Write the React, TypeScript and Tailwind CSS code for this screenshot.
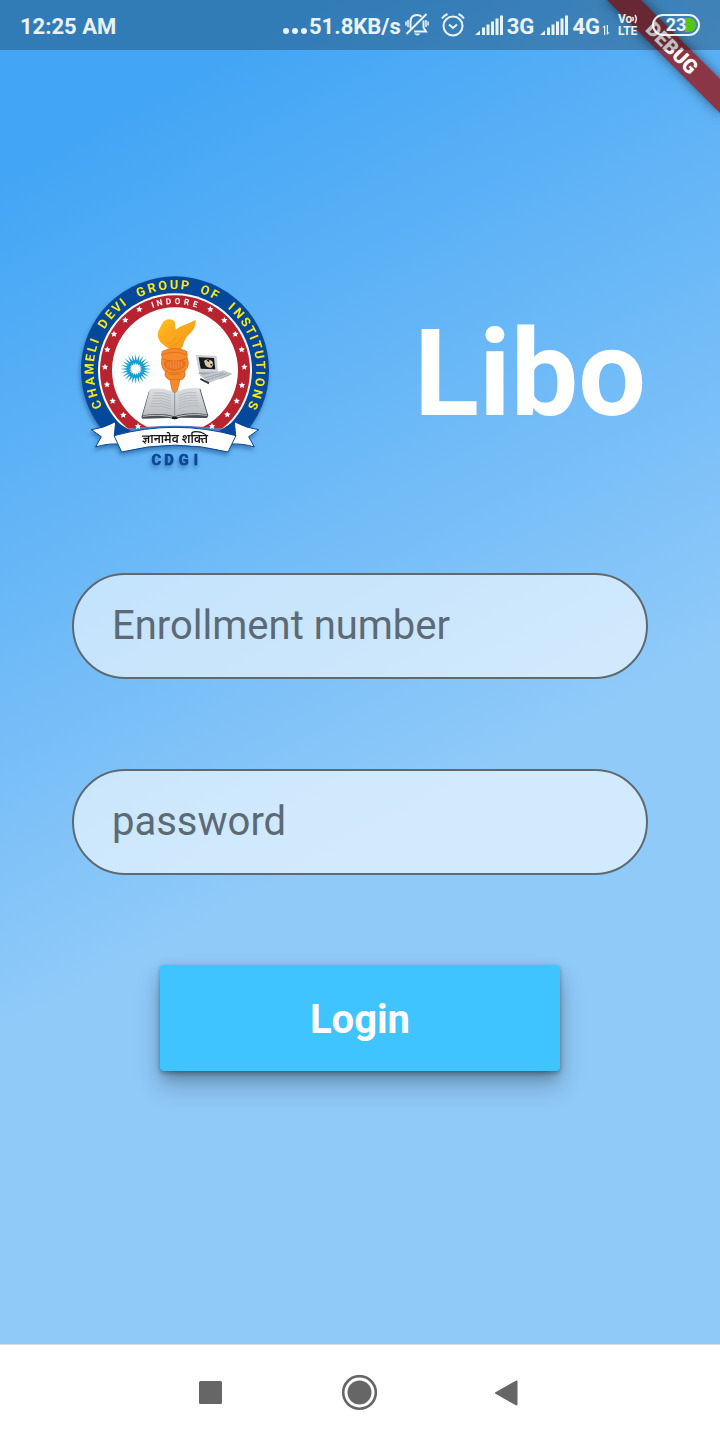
import React from 'react';

const CX = 315;
const CY = 319;

type Glyph = [string, number];

const OUTER_LETTERS: Glyph[] = [
  ['C', -113.6], ['H', -105.5], ['A', -97.4], ['M', -89], ['E', -81.6], ['L', -75.1], ['I', -69.8],
  ['D', -57.1], ['E', -49.4], ['V', -42.8], ['I', -37.4],
  ['G', -23.5], ['R', -15.8], ['O', -8.2], ['U', -0.6], ['P', 6.8],
  ['O', 20.6], ['F', 27.8],
  ['I', 41.5], ['N', 48.2], ['S', 55.6], ['T', 62.2], ['I', 67.4], ['T', 72.8], ['U', 79.4],
  ['T', 86.4], ['I', 91.7], ['O', 98], ['N', 106], ['S', 114.2],
];

const INNER_LETTERS: Glyph[] = [
  ['I', -18.8], ['N', -13], ['D', -5.4], ['O', 2], ['R', 9.6], ['E', 17],
];

const STARS: [number, number][] = [
  [208, 136], [166, 168], [132, 210], [112, 257], [105, 309], [111, 362], [128, 411], [160, 453], [204, 487],
  [421, 136], [463, 169], [496, 210], [515, 257], [523, 309], [516, 364], [500, 411], [472, 452], [426, 487],
];

function points(count: number, outer: number, inner: number, cx: number, cy: number) {
  const out: string[] = [];
  for (let i = 0; i < count * 2; i++) {
    const r = i % 2 === 0 ? outer : inner;
    const a = (Math.PI * i) / count - Math.PI / 2;
    out.push(`${(cx + r * Math.cos(a)).toFixed(1)},${(cy + r * Math.sin(a)).toFixed(1)}`);
  }
  return out.join(' ');
}

function RingText({ glyphs, radius, className }: { glyphs: Glyph[]; radius: number; className: string }) {
  return (
    <g textAnchor="middle" className={className}>
      {glyphs.map(([ch, angle], i) => (
        <text key={i} x={CX} y={CY - radius} transform={`rotate(${angle} ${CX} ${CY})`}>
          {ch}
        </text>
      ))}
    </g>
  );
}

function CollegeLogo() {
  return (
    <svg
      viewBox="6 3 612 654"
      className="h-[218px] w-[204px] shrink-0 overflow-visible drop-shadow-[-1px_3px_2px_rgba(0,30,80,0.4)]"
      role="img"
      aria-label="Chameli Devi Group of Institutions"
    >
      <defs>
        <linearGradient id="flame" x1="0" y1="0" x2="1" y2="1">
          <stop offset="0" stopColor="#ffc81c" />
          <stop offset="0.35" stopColor="#fbab1c" />
          <stop offset="1" stopColor="#f79c1d" />
        </linearGradient>
        <linearGradient id="page" x1="0" y1="0" x2="0" y2="1">
          <stop offset="0" stopColor="#dcdee1" />
          <stop offset="1" stopColor="#b9bdc2" />
        </linearGradient>
        <clipPath id="seal">
          <path d="M0 0 H630 V500 H497 Q315 470 133 500 H0 Z" />
        </clipPath>
      </defs>

      <g clipPath="url(#seal)">
        <circle cx={CX} cy={CY} r="282" fill="#04489c" />
        <circle cx={CX} cy={CY} r="231" fill="#ffffff" />
        <circle cx={CX} cy={CY} r="225" fill="#b9232f" />
        <circle cx={CX} cy={CY} r="189" fill="#ffffff" />
      </g>

      <RingText
        glyphs={OUTER_LETTERS}
        radius={244}
        className="fill-[#fbe71a] font-['Liberation_Sans_Narrow','Roboto',sans-serif] text-[38px] font-bold"
      />
      <RingText
        glyphs={INNER_LETTERS}
        radius={199}
        className="fill-white font-['Liberation_Sans_Narrow','Roboto',sans-serif] text-[25px] font-bold"
      />
      {STARS.map(([x, y]) => (
        <polygon key={`${x}-${y}`} points={points(5, 10, 5, x, y)} fill="#ffffff" />
      ))}

      {/* sun */}
      <polygon points={points(24, 46, 24, 197, 315)} fill="#1b9fd3" />
      <circle cx="197" cy="315" r="27" fill="#1b9fd3" />
      <polygon points={points(16, 19, 13, 197, 315)} fill="#ffffff" />

      {/* flame */}
      <path
        d="M263 210 C264 199 272 190 277 178 C282 164 306 162 313 172 C318 181 312 190 319 196 C332 184 354 180 377 167 C376 187 372 196 366 202 C353 214 346 224 342 235 C338 247 338 256 324 257 C305 258 290 253 281 243 C270 234 263 224 263 210 Z"
        fill="url(#flame)"
      />
      <path
        d="M300 246 C318 246 326 232 338 220 M290 236 C304 240 310 232 316 222"
        fill="none"
        stroke="#f58a1c"
        strokeWidth="5"
        strokeLinecap="round"
        opacity="0.5"
      />

      {/* torch */}
      <g stroke="#d86514" strokeWidth="2" fill="#f58a2c">
        <path d="M298 340 L332 340 L321 382 Q313 386 307 382 Z" />
        <path d="M286 322 L344 322 Q349 336 338 346 L294 346 Q281 336 286 322 Z" />
        <path d="M276 282 Q271 305 283 320 Q313 334 346 320 Q360 305 352 282 Z" />
        <ellipse cx="314" cy="300" rx="31" ry="19" fill="#ea7420" />
        <path d="M277 262 Q313 244 350 262 Q354 274 350 284 Q313 298 277 284 Q272 273 277 262 Z" />
        <path d="M277 272 Q313 258 350 272" fill="none" />
      </g>
      <path d="M294 308 V294 M302 313 V292 M310 315 V290 M318 315 V290 M326 313 V292 M334 308 V294" stroke="#f6a35c" strokeWidth="2" />
      <path d="M296 331 H334" stroke="#d86514" strokeWidth="2" />

      {/* computer */}
      <path d="M378 274 L439 277 L443 325 L388 323 Z" fill="#cfd3d9" stroke="#a3a9b0" strokeWidth="1" />
      <path d="M386 280 L432 282 L436 316 L392 314 Z" fill="#15181d" />
      <path d="M402 290 Q414 282 426 291 Q434 302 424 311 Q412 313 406 304 Z" fill="#d8c9a2" />
      <path d="M409 289 L418 287 L417 295 Z M420 300 L428 299 L424 306 Z" fill="#1b1b1b" />
      <path d="M386 325 L441 325 L457 329 L403 334 L387 330 Z" fill="#9aa2ac" />
      <path d="M390 334 L462 320 L486 330 L418 355 Z" fill="#c3c8ce" stroke="#a3a9b0" strokeWidth="1" />
      <path d="M402 342 L460 327 M409 348 L470 329 M448 345 L478 333" stroke="#8d949d" strokeWidth="2" />
      <path d="M392 342 L418 355 L416 361 L390 347 Z" fill="#343a42" />

      {/* book */}
      <path d="M214 460 L236 384 L238 382 L310 384 L322 384 L391 374 L415 455 L411 462 L332 461 L314 466 L297 462 L218 464 Z" fill="#4a4f55" />
      <path d="M218 454 L240 375 Q285 370 314 386 L314 457 Q275 445 218 454 Z" fill="url(#page)" />
      <path d="M411 451 L388 373 Q345 368 314 386 L314 457 Q352 443 411 451 Z" fill="url(#page)" />
      <path d="M218 457 Q275 449 313 461 Q352 447 411 454" fill="none" stroke="#ffffff" strokeWidth="2" />
      <path d="M314 386 V458" stroke="#8c9298" strokeWidth="2" />
      <path
        d="M251 387 Q280 382 303 395 M249 395 Q279 390 303 403 M247 403 Q277 398 303 411 M245 411 Q276 406 303 419 M243 419 Q275 414 303 427 M241 427 Q274 422 303 435 M326 395 Q350 382 378 386 M326 403 Q350 390 380 394 M326 411 Q350 398 382 402 M326 419 Q350 406 384 410 M326 427 Q350 414 386 418 M326 435 Q350 422 388 426"
        fill="none"
        stroke="#a9aeb4"
        strokeWidth="2"
      />
      <ellipse cx="314" cy="462" rx="9" ry="4" fill="#16181a" />

      {/* ribbon */}
      <g stroke="#04489c" strokeWidth="3" strokeLinejoin="round">
        <path d="M64 497 Q100 493 137 473 L150 540 Q110 538 77 549 L94 518 Z" fill="#ffffff" />
        <path d="M566 497 Q530 493 493 473 L480 540 Q520 538 553 549 L536 518 Z" fill="#ffffff" />
        <path d="M137 473 L185 504 L133 515 Z" fill="#04489c" />
        <path d="M493 473 L445 504 L497 515 Z" fill="#04489c" />
        <path d="M132 515 Q315 465 498 515 L474 564 Q315 523 155 564 Z" fill="#ffffff" />
      </g>
      <text
        x="315"
        y="537"
        textAnchor="middle"
        className="fill-[#171717] font-['Noto_Sans_Devanagari','Noto_Sans',sans-serif] text-[36px] font-semibold"
      >
        ज्ञानामेव शक्ति
      </text>
      <g
        textAnchor="middle"
        className="fill-[#0a4795] font-['Liberation_Sans_Narrow','Roboto',sans-serif] text-[44px] font-bold"
        stroke="#0a4795"
        strokeWidth="2"
      >
        <text x="259" y="602">C</text>
        <text x="297" y="602">D</text>
        <text x="341" y="602">G</text>
        <text x="378" y="602">I</text>
      </g>
    </svg>
  );
}

function MutedBell() {
  return (
    <svg viewBox="0 0 24 24" className="size-6 shrink-0" fill="none" stroke="currentColor" strokeWidth="2" aria-hidden="true">
      <path d="M5.500 15.500 V9 C5.500 4.500 8 2 12 2 C14 2 15.500 2.600 16.600 3.700 M18.500 7.500 V14.500 L21 18.500 H9" />
      <path d="M1.500 21 L21.500 1" />
      <path d="M3 7 V14 M1 8.500 V12.500 M21 7 V14 M23 8.500 V12.500" strokeWidth="1.500" />
      <path d="M9 20.500 H15.500 Q12.300 24.500 9 20.500 Z" fill="currentColor" stroke="none" />
    </svg>
  );
}

function AlarmClock() {
  return (
    <svg viewBox="0 0 24 24" className="size-6 shrink-0" fill="none" stroke="currentColor" strokeWidth="2" aria-hidden="true">
      <circle cx="12" cy="13" r="9.500" />
      <path d="M8 11.500 L12 15 L16 11.500" />
      <path d="M1 5.500 Q3 2.500 6.500 1 M23 5.500 Q21 2.500 17.500 1" />
    </svg>
  );
}

function Signal() {
  return (
    <svg viewBox="0 0 28 20" className="h-5 w-7 shrink-0" fill="currentColor" aria-hidden="true">
      <path d="M0 20 L5 15.500 V20 Z" />
      <rect x="7" y="12.500" width="3" height="7.500" />
      <rect x="11.500" y="9.500" width="3" height="10.500" />
      <rect x="16" y="6.500" width="3" height="13.500" />
      <rect x="20.500" y="3.500" width="3" height="16.500" />
      <rect x="25" y="0.500" width="3" height="19.500" />
    </svg>
  );
}

function StatusBar() {
  return (
    <header className="relative z-10 flex h-[50px] items-center justify-between bg-black/25 px-5 text-[22px] font-bold leading-none text-white/90">
      <span className="pt-1">12:25 AM</span>
      <div className="flex items-center">
        <svg viewBox="0 0 24 20" className="mr-0.5 h-5 w-6" fill="currentColor" aria-hidden="true">
          <circle cx="3" cy="16" r="3" />
          <circle cx="12" cy="16" r="3" />
          <circle cx="21" cy="16" r="3" />
        </svg>
        <span className="mr-1 pt-1">51.8KB/s</span>
        <span className="mr-3"><MutedBell /></span>
        <span className="mr-2.5"><AlarmClock /></span>
        <Signal />
        <span className="ml-1 mr-1.5 pt-1">3G</span>
        <Signal />
        <span className="ml-1 pt-1">4G</span>
        <svg viewBox="0 0 8 10" className="ml-0.5 mt-2.5 h-2.5 w-2" fill="currentColor" aria-hidden="true">
          <path d="M2 10 V2.500 H0.200 L3.200 0 V10 Z M4.800 0 V10 L7.800 7.500 H6 V0 Z" />
        </svg>
        <span className="ml-2 mr-2.5 flex w-6 flex-col text-[12px] leading-[12px]">
          <span className="flex items-center">
            Vo
            <svg viewBox="0 0 6 10" className="h-2.5 w-1.5" fill="none" stroke="currentColor" strokeWidth="1.500" aria-hidden="true">
              <path d="M0.500 3 Q2 5 0.500 7 M3 1 Q5.500 5 3 9" />
            </svg>
          </span>
          <span>LTE</span>
        </span>
        <span className="relative flex h-[22px] w-12 items-center justify-center overflow-hidden rounded-full border-2 border-white/90 text-[18px]">
          <svg viewBox="0 0 11 14" className="absolute right-0.5 h-3.5 w-[11px]" aria-hidden="true">
            <path d="M0 0 H4 Q11 1 11 7 Q11 13 4 14 H0 Z" fill="#55c615" />
          </svg>
          <span className="relative">23</span>
        </span>
      </div>
    </header>
  );
}

function Field({ label, type }: { label: string; type: string }) {
  return (
    <input
      type={type}
      aria-label={label}
      placeholder={label}
      className="h-[106px] w-full rounded-full border-2 border-[#5f6972] bg-white/60 px-[38px] pb-0.5 text-[40px] text-[#5c6a76] outline-none placeholder:text-[#5c6a76] placeholder:opacity-100"
    />
  );
}

export default function App() {
  return (
    <div className="flex min-h-screen flex-col font-['Roboto',sans-serif]">
      <div className="relative flex flex-1 flex-col overflow-hidden bg-[linear-gradient(152deg,#42a5f5_10%,#90caf9_60%)]">
        <div className="absolute -right-8 top-9 flex h-6 w-40 rotate-45 items-center justify-center bg-[#8a3646] text-[20px] font-black leading-none text-white shadow-[0_0_12px_rgba(0,0,0,0.5)]">
          DEBUG
        </div>
        <StatusBar />
        <main className="flex flex-1 flex-col px-[72px] pt-[215px]">
          <div className="flex items-center justify-between">
            <CollegeLogo />
            <h1 className="pr-0.5 text-[120px] font-bold leading-none text-white">Libo</h1>
          </div>
          <form className="mt-[90px] flex flex-col items-center gap-[90px]" onSubmit={(e) => e.preventDefault()}>
            <Field label="Enrollment number" type="text" />
            <Field label="password" type="password" />
            <button
              type="submit"
              className="h-[106px] w-[400px] rounded-[4px] bg-[#40c4ff] pt-1 text-[40px] font-bold text-white shadow-[0_10px_12px_-6px_rgba(0,0,0,0.2),0_16px_24px_2px_rgba(0,0,0,0.18),0_4px_16px_0px_rgba(0,0,0,0.1),0_2px_4px_rgba(0,0,0,0.3)]"
            >
              Login
            </button>
          </form>
        </main>
      </div>
      <nav className="flex h-24 items-center justify-center gap-[108px] border-t border-[#dcdcdc] bg-white pr-0.5 text-[#666666]">
        <button type="button" aria-label="Recent apps" className="flex size-10 items-center justify-center">
          <svg viewBox="0 0 24 24" className="size-6" fill="currentColor"><rect x="0" y="0" width="23" height="23" rx="1.500" /></svg>
        </button>
        <button type="button" aria-label="Home" className="flex size-10 items-center justify-center">
          <svg viewBox="0 0 36 36" className="size-9" fill="none" stroke="currentColor">
            <circle cx="18.500" cy="17.500" r="16.300" strokeWidth="2.600" />
            <circle cx="18.500" cy="17.500" r="12" fill="currentColor" stroke="none" />
          </svg>
        </button>
        <button type="button" aria-label="Back" className="flex size-10 items-center justify-center">
          <svg viewBox="0 0 24 28" className="h-7 w-6" fill="currentColor" stroke="currentColor" strokeWidth="2" strokeLinejoin="round">
            <path d="M21.500 2.500 V25.500 L1 14 Z" />
          </svg>
        </button>
      </nav>
    </div>
  );
}
